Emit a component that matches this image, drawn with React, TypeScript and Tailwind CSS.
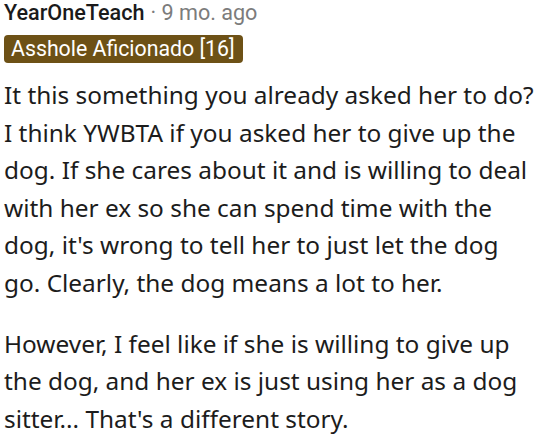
import React from "react";

const App: React.FC = () => {
  return (
    <div className="w-[543px] h-[435px] bg-white overflow-hidden px-[4px] text-[#1c1c1c]" style={{ fontFamily: '"Noto Sans", sans-serif' }}>
      <div className="flex items-baseline text-[21.6px] leading-[26px]" style={{ fontFamily: 'Roboto, "Noto Sans", sans-serif' }}>
        <span className="font-medium text-[#1a1a1b]">YearOneTeach</span>
        <span className="text-[#7c7c7c] ml-[6px]">· 9 mo. ago</span>
      </div>
      <div className="mt-[9px] inline-block bg-[#6d5116] text-white text-[21.3px] leading-[28px] pl-[7px] pr-[8px] rounded-[4px]" style={{ fontFamily: 'Roboto, "Noto Sans", sans-serif' }}>
        Asshole Aficionado [16]
      </div>
      <div className="mt-[13px] text-[24.4px] leading-[37.6px]">
        <p>
          It this something you already asked her to do? I think YWBTA if you asked her to give up the dog. If she cares about it and is willing to deal with her ex so she can spend time with the dog, it's wrong to tell her to just let the dog go. Clearly, the dog means a lot to her.
        </p>
        <p className="mt-[23px]">
          However, I feel like if she is willing to give up the dog, and her ex is just using her as a dog sitter... That's a different story.
        </p>
      </div>
    </div>
  );
};

export default App;
